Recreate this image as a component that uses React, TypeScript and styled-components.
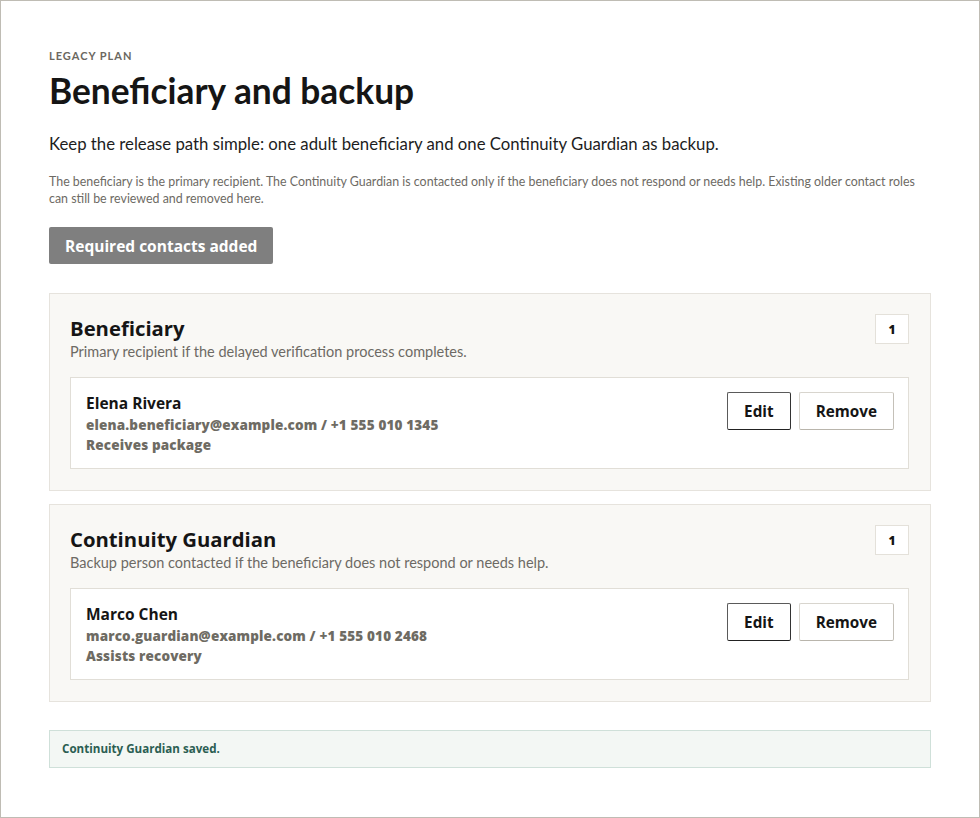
import React from 'react';
import styled, { createGlobalStyle } from 'styled-components';

const GlobalStyle = createGlobalStyle`
  html, body {
    margin: 0;
    padding: 0;
    background: #ffffff;
  }
  * {
    box-sizing: border-box;
  }
  body {
    font-family: Lato, "Noto Sans", "Liberation Sans", sans-serif;
    color: #151515;
  }
`;

const heavy = `"Open Sans", Lato, "Liberation Sans", sans-serif`;

interface IContact {
  name: string,
  email: string,
  phone: string,
  note: string,
}

interface IRoleSection {
  title: string,
  description: string,
  contacts: IContact[],
}

const sections: IRoleSection[] = [
  {
    title: 'Beneficiary',
    description: 'Primary recipient if the delayed verification process completes.',
    contacts: [
      {
        name: 'Elena Rivera',
        email: 'elena.beneficiary@example.com',
        phone: '+1 555 010 1345',
        note: 'Receives package',
      },
    ],
  },
  {
    title: 'Continuity Guardian',
    description: 'Backup person contacted if the beneficiary does not respond or needs help.',
    contacts: [
      {
        name: 'Marco Chen',
        email: 'marco.guardian@example.com',
        phone: '+1 555 010 2468',
        note: 'Assists recovery',
      },
    ],
  },
];

const Frame = styled.div`
  width: 980px;
  min-height: 818px;
  border: 1px solid #bfbcb4;
  padding: 47px 48px 40px 48px;
`;

const Eyebrow = styled.div`
  font-size: 11px;
  font-weight: 700;
  letter-spacing: 1px;
  color: #6b6861;
  text-transform: uppercase;
  line-height: 16px;
`;

const Title = styled.h1`
  margin: 5px 0 0;
  font-size: 35.3px;
  font-weight: 700;
  line-height: 44px;
  color: #151515;
`;

const Lead = styled.p`
  margin: 20px 0 0;
  font-size: 16.75px;
  line-height: 22px;
  color: #1d1d1d;
`;

const Fine = styled.p`
  margin: 18px 0 0;
  font-size: 12.4px;
  line-height: 17px;
  color: #6d6a64;
`;

const StatusButton = styled.button`
  margin-top: 20px;
  height: 37px;
  padding: 0 16px;
  border: 0;
  border-radius: 2px;
  background: #7f7f7f;
  color: #ffffff;
  font-family: ${heavy};
  font-size: 15.5px;
  font-weight: 700;
  cursor: default;
`;

const Sections = styled.div`
  margin-top: 29px;
  display: flex;
  flex-direction: column;
  gap: 13px;
`;

const Section = styled.section`
  background: #f9f8f5;
  border: 1px solid #e6e3dd;
  padding: 20px 21px 21px 20px;
`;

const SectionHead = styled.div`
  display: flex;
  justify-content: space-between;
  align-items: flex-start;
`;

const SectionTitle = styled.h2`
  margin: 0;
  font-family: ${heavy};
  font-size: 20.3px;
  font-weight: 700;
  line-height: 28px;
  color: #151515;
`;

const SectionText = styled.p`
  margin: 1px 0 0;
  font-size: 14.5px;
  line-height: 18px;
  color: #6d6a64;
`;

const CountBadge = styled.span`
  margin-top: 0;
  width: 34px;
  height: 30px;
  display: flex;
  align-items: center;
  justify-content: center;
  background: #ffffff;
  border: 1px solid #e4e1da;
  font-family: ${heavy};
  font-size: 12px;
  font-weight: 800;
  color: #151515;
`;

const ContactCard = styled.div`
  margin-top: 16px;
  background: #ffffff;
  border: 1px solid #e1ded7;
  padding: 14px 14px 13px 15px;
  display: flex;
  justify-content: space-between;
  align-items: flex-start;
`;

const ContactInfo = styled.div`
  display: flex;
  flex-direction: column;
`;

const ContactName = styled.div`
  font-family: ${heavy};
  font-size: 15.5px;
  font-weight: 700;
  line-height: 23px;
  color: #151515;
`;

const ContactMeta = styled.div`
  font-family: ${heavy};
  font-size: 13.5px;
  font-weight: 800;
  letter-spacing: 0.15px;
  line-height: 20px;
  color: #6e6b63;
`;

const Actions = styled.div`
  display: flex;
  gap: 8px;
`;

const ActionButton = styled.button<{ $strong?: boolean }>`
  height: 38px;
  padding: 0 16px;
  background: #ffffff;
  border: 1px solid ${(p) => (p.$strong ? '#5a5a5a' : '#d8d5ce')};
  border-bottom-color: ${(p) => (p.$strong ? '#222222' : '#b9b5ac')};
  border-right-color: ${(p) => (p.$strong ? '#333333' : '#c4c0b8')};
  border-radius: 2px;
  font-family: ${heavy};
  font-size: 15.3px;
  font-weight: 700;
  color: #151515;
  cursor: pointer;
`;

const Notice = styled.div`
  margin-top: 28px;
  background: #f3f7f4;
  border: 1px solid #cfe0d9;
  padding: 10px 12px;
  font-family: ${heavy};
  font-size: 11.6px;
  font-weight: 700;
  line-height: 16px;
  color: #2b5e52;
`;

function ContactRow({ contact }: { contact: IContact }) {
  return (
    <ContactCard>
      <ContactInfo>
        <ContactName>{contact.name}</ContactName>
        <ContactMeta>{`${contact.email} / ${contact.phone}`}</ContactMeta>
        <ContactMeta>{contact.note}</ContactMeta>
      </ContactInfo>
      <Actions>
        <ActionButton $strong>Edit</ActionButton>
        <ActionButton>Remove</ActionButton>
      </Actions>
    </ContactCard>
  );
}

export default function App() {
  return (
    <>
      <GlobalStyle />
      <Frame>
        <Eyebrow>Legacy plan</Eyebrow>
        <Title>Beneficiary and backup</Title>
        <Lead>
          Keep the release path simple: one adult beneficiary and one Continuity Guardian as backup.
        </Lead>
        <Fine>
          The beneficiary is the primary recipient. The Continuity Guardian is contacted only if the
          beneficiary does not respond or needs help. Existing older contact roles can still be
          reviewed and removed here.
        </Fine>
        <StatusButton type="button">Required contacts added</StatusButton>
        <Sections>
          {sections.map((section) => (
            <Section key={section.title}>
              <SectionHead>
                <div>
                  <SectionTitle>{section.title}</SectionTitle>
                  <SectionText>{section.description}</SectionText>
                </div>
                <CountBadge>{section.contacts.length}</CountBadge>
              </SectionHead>
              {section.contacts.map((contact) => (
                <ContactRow key={contact.email} contact={contact} />
              ))}
            </Section>
          ))}
        </Sections>
        <Notice>Continuity Guardian saved.</Notice>
      </Frame>
    </>
  );
}
